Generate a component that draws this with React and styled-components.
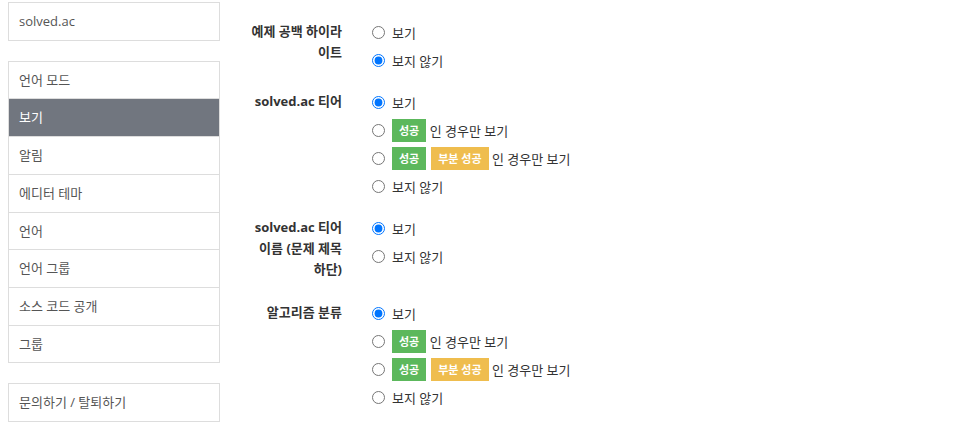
import React from "react";
import styled, { createGlobalStyle } from "styled-components";

const GlobalStyle = createGlobalStyle`
  body {
    margin: 0;
    background: #fff;
    font-family: "Open Sans", "Noto Sans CJK KR", sans-serif;
    font-size: 13px;
    color: #333;
  }
`;

const Page = styled.div`
  display: flex;
  align-items: flex-start;
  padding: 2px 0 0 8px;
`;

const Sidebar = styled.div`
  width: 212px;
  display: flex;
  flex-direction: column;
  gap: 20px;
`;

const Box = styled.div`
  border: 1px solid #ddd;
  background: #fff;
`;

const Item = styled.div`
  padding: 9px 10px;
  line-height: 18.7px;
  color: ${(p) => (p.$active ? "#fff" : "#555")};
  background: ${(p) => (p.$active ? "#71767f" : "#fff")};
  & + & {
    border-top: 1px solid #ddd;
  }
`;

const Main = styled.div`
  margin-left: 28px;
  padding-top: 16px;
  display: flex;
  flex-direction: column;
  gap: 14px;
`;

const Section = styled.div`
  display: grid;
  grid-template-columns: 94px 1fr;
  column-gap: 30px;
  align-items: start;
`;

const Label = styled.div`
  text-align: right;
  font-weight: 700;
  line-height: 21px;
  padding: 3px 0 5px;
  color: #333;
`;

const Options = styled.div`
  display: flex;
  flex-direction: column;
`;

const Option = styled.label`
  display: flex;
  align-items: center;
  height: 28px;
  white-space: pre;
`;

const Radio = styled.input`
  width: 13px;
  height: 13px;
  margin: 0 7px 0 0;
`;

const Badge = styled.span`
  display: inline-flex;
  align-items: center;
  height: 23px;
  padding: 0 7px;
  font-size: 11px;
  font-weight: 700;
  color: #fff;
  background: ${(p) => (p.$tone === "partial" ? "#efbd4e" : "#5cb85c")};
  & + & {
    margin-left: 5px;
  }
`;

const sidebarMenu = ["언어 모드", "보기", "알림", "에디터 테마", "언어", "언어 그룹", "소스 코드 공개", "그룹"];

const showHide = [
  { key: "show", content: "보기" },
  { key: "hide", content: "보지 않기" },
];

const tierOptions = [
  { key: "show", content: "보기" },
  { key: "ac", content: <><Badge>성공</Badge>{" 인 경우만 보기"}</> },
  {
    key: "partial",
    content: (
      <>
        <Badge>성공</Badge>
        <Badge $tone="partial">부분 성공</Badge>
        {" 인 경우만 보기"}
      </>
    ),
  },
  { key: "hide", content: "보지 않기" },
];

const settings = [
  { name: "highlight", label: "예제 공백 하이라이트", checked: "hide", options: showHide },
  { name: "tier", label: "solved.ac 티어", checked: "show", options: tierOptions },
  { name: "tiername", label: "solved.ac 티어 이름 (문제 제목 하단)", checked: "show", options: showHide },
  { name: "algo", label: "알고리즘 분류", checked: "show", options: tierOptions },
];

export default function App() {
  return (
    <>
      <GlobalStyle />
      <Page>
        <Sidebar>
          <Box>
            <Item>solved.ac</Item>
          </Box>
          <Box>
            {sidebarMenu.map((m) => (
              <Item key={m} $active={m === "보기"}>
                {m}
              </Item>
            ))}
          </Box>
          <Box>
            <Item>문의하기 / 탈퇴하기</Item>
          </Box>
        </Sidebar>
        <Main>
          {settings.map((s) => (
            <Section key={s.name}>
              <Label>{s.label}</Label>
              <Options>
                {s.options.map((o) => (
                  <Option key={o.key}>
                    <Radio type="radio" name={s.name} defaultChecked={o.key === s.checked} />
                    {o.content}
                  </Option>
                ))}
              </Options>
            </Section>
          ))}
        </Main>
      </Page>
    </>
  );
}
